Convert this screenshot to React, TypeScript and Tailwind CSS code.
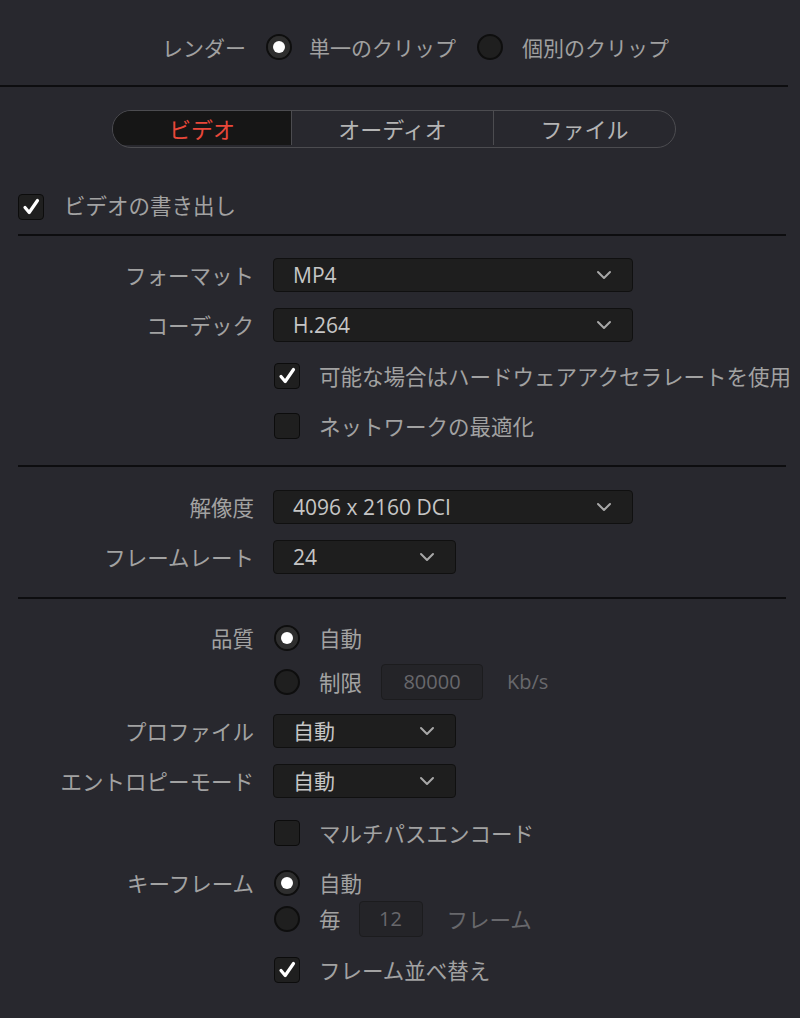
import React from 'react';

const font = { fontFamily: '"Noto Sans CJK JP", "Noto Sans", sans-serif' };
const latin = { fontFamily: '"Open Sans", "Noto Sans CJK JP", sans-serif' };

function Radio({ checked }: { checked?: boolean }) {
  return (
    <span className="flex h-[26px] w-[26px] shrink-0 items-center justify-center rounded-full border-2 border-[#0e0e0e] bg-[#1f1f1f]">
      {checked && (
        <span className="flex h-[22px] w-[22px] items-center justify-center rounded-full bg-[#2e2e2e]">
          <span className="h-[12px] w-[12px] rounded-full bg-white" />
        </span>
      )}
    </span>
  );
}

function Checkbox({ checked }: { checked?: boolean }) {
  return (
    <span className="flex h-[26px] w-[26px] shrink-0 items-center justify-center rounded-[4px] border border-[#0c0c0c] bg-[#1f1f1f]">
      {checked && (
        <svg width="18" height="18" viewBox="0 0 18 18">
          <path d="M3 9.5 L7.2 14.5 L15.5 2.5" fill="none" stroke="white" strokeWidth="3.2" strokeLinecap="round" strokeLinejoin="round" />
        </svg>
      )}
    </span>
  );
}

function Chevron() {
  return (
    <svg width="16" height="10" viewBox="0 0 16 10">
      <path d="M2 2 L8 8 L14 2" fill="none" stroke="#a8a8a8" strokeWidth="2" strokeLinecap="round" strokeLinejoin="round" />
    </svg>
  );
}

function Select({ value, wide }: { value: string; wide?: boolean }) {
  return (
    <div
      className={`flex h-[34px] items-center justify-between rounded-[4px] border border-[#101010] bg-[#1e1e1e] pl-[19px] pr-[20px] text-[21px] text-[#c6c6c6] ${
        wide ? 'w-[360px]' : 'w-[183px]'
      }`}
    >
      <span style={latin}>{value}</span>
      <Chevron />
    </div>
  );
}

function Row({ label, children, className = '' }: { label?: string; children: React.ReactNode; className?: string }) {
  return (
    <div className={`flex items-center ${className}`}>
      <div className="w-[254px] shrink-0 text-right text-[21.5px] text-[#a2a2a2]">{label}</div>
      <div className="ml-[19px] flex items-center">{children}</div>
    </div>
  );
}

function CheckRow({ label, checked, className = '' }: { label: string; checked?: boolean; className?: string }) {
  return (
    <Row className={className}>
      <div className="ml-px flex items-center gap-[19px] whitespace-nowrap">
        <Checkbox checked={checked} />
        <span className="text-[21.5px] text-[#a2a2a2]">{label}</span>
      </div>
    </Row>
  );
}

function Divider({ className = '' }: { className?: string }) {
  return <div className={`h-[2px] bg-[#0d0d0f] ${className}`} />;
}

export default function App() {
  return (
    <div className="h-[1018px] w-[800px] overflow-hidden bg-[#28282e] leading-none" style={font}>
      <div className="mt-[34px] flex h-[26px] items-center pl-[162px] text-[21px] text-[#a0a0a0]">
        <span>レンダー</span>
        <span className="ml-[20px]"><Radio checked /></span>
        <span className="ml-[17px]">単一のクリップ</span>
        <span className="ml-[21px]"><Radio /></span>
        <span className="ml-[19px]">個別のクリップ</span>
      </div>
      <Divider className="mt-[25px] w-[788px]" />

      <div className="ml-[112px] mt-[23px] flex h-[38px] w-[564px] overflow-hidden rounded-full border border-[#4c4c50] pb-[2px] text-[22px]">
        <div className="flex w-[178px] items-center justify-center bg-[#161616] text-[#e9483a]">ビデオ</div>
        <div className="flex w-[203px] items-center justify-center border-x border-[#4c4c50] text-[#b4b4b4]">オーディオ</div>
        <div className="flex flex-1 items-center justify-center text-[#b4b4b4]">ファイル</div>
      </div>

      <div className="ml-[18px] mt-[46px] flex items-center gap-[20px]">
        <Checkbox checked />
        <span className="pb-[4px] text-[21.5px] text-[#a2a2a2]">ビデオの書き出し</span>
      </div>
      <Divider className="ml-[18px] mt-[14px] w-[768px]" />

      <Row label="フォーマット" className="mt-[22px]">
        <Select value="MP4" wide />
      </Row>
      <Row label="コーデック" className="mt-[16px]">
        <Select value="H.264" wide />
      </Row>
      <CheckRow label="可能な場合はハードウェアアクセラレートを使用" checked className="mt-[21px]" />
      <CheckRow label="ネットワークの最適化" className="mt-[24px]" />
      <Divider className="ml-[18px] mt-[26px] w-[768px]" />

      <Row label="解像度" className="mt-[23px]">
        <Select value="4096 x 2160 DCI" wide />
      </Row>
      <Row label="フレームレート" className="mt-[16px]">
        <Select value="24" />
      </Row>
      <Divider className="ml-[18px] mt-[23px] w-[768px]" />

      <Row label="品質" className="mt-[26px]">
        <div className="ml-px flex items-center gap-[19px] text-[21.5px] text-[#a2a2a2]">
          <Radio checked />
          <span>自動</span>
        </div>
      </Row>
      <Row className="mt-[13px]">
        <div className="ml-px flex items-center text-[21.5px] text-[#a2a2a2]">
          <Radio />
          <span className="ml-[19px]">制限</span>
          <div
            className="ml-[19px] flex h-[36px] w-[102px] items-center justify-center rounded-[4px] border border-[#1c1c1e] bg-[#242428] text-[20px] text-[#68686c]"
            style={latin}
          >
            80000
          </div>
          <span className="ml-[24px] text-[20px] text-[#68686c]" style={latin}>Kb/s</span>
        </div>
      </Row>
      <Row label="プロファイル" className="mt-[14px]">
        <Select value="自動" />
      </Row>
      <Row label="エントロピーモード" className="mt-[16px]">
        <Select value="自動" />
      </Row>
      <CheckRow label="マルチパスエンコード" className="mt-[22px]" />

      <Row label="キーフレーム" className="mt-[24px]">
        <div className="ml-px flex items-center gap-[19px] text-[21.5px] text-[#a2a2a2]">
          <Radio checked />
          <span>自動</span>
        </div>
      </Row>
      <Row className="mt-[5px]">
        <div className="ml-px flex items-center text-[21.5px] text-[#a2a2a2]">
          <Radio />
          <span className="ml-[19px]">毎</span>
          <div
            className="ml-[18px] flex h-[36px] w-[64px] items-center justify-center rounded-[4px] border border-[#1c1c1e] bg-[#242428] text-[20px] text-[#68686c]"
            style={latin}
          >
            12
          </div>
          <span className="ml-[24px] text-[21.5px] text-[#68686c]">フレーム</span>
        </div>
      </Row>
      <CheckRow label="フレーム並べ替え" checked className="mt-[20px]" />
    </div>
  );
}
